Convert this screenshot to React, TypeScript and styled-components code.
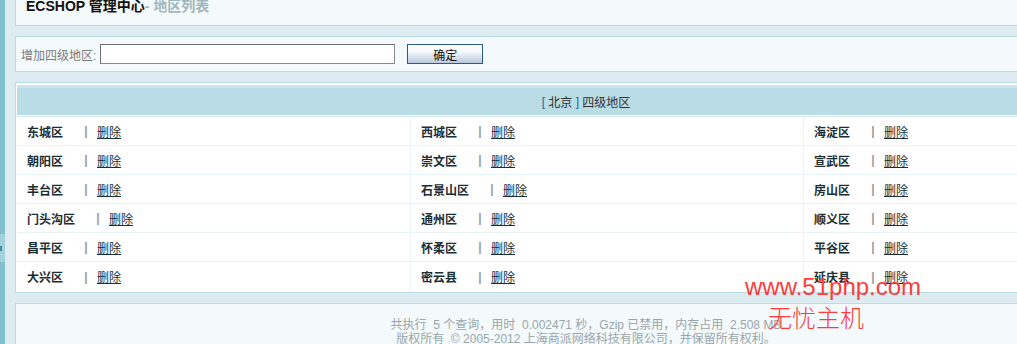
import React from "react";
import styled, { createGlobalStyle } from "styled-components";

const GlobalStyle = createGlobalStyle`
    html, body {
        margin: 0;
        padding: 0;
        height: 344px;
        overflow: hidden;
        background: #dcecf1;
    }
    body {
        font-family: "Liberation Sans", "Noto Sans CJK SC", sans-serif;
        font-size: 12px;
        color: #1b2e33;
    }
`;

const regions: string[] = [
    "东城区", "西城区", "海淀区",
    "朝阳区", "崇文区", "宣武区",
    "丰台区", "石景山区", "房山区",
    "门头沟区", "通州区", "顺义区",
    "昌平区", "怀柔区", "平谷区",
    "大兴区", "密云县", "延庆县",
];

const Frame = styled.div`
    display: flex;
    width: 1172px;
    height: 344px;
    position: relative;
`;

const SideStrip = styled.div`
    width: 5px;
    flex: none;
    background: #82bfcd;
    display: flex;
    flex-direction: column;
    padding-top: 234px;
    box-sizing: border-box;
`;

const SideHandle = styled.div`
    height: 28px;
    background: #a3d2dd;
    border-left: 2px solid #a3d2dd;
    box-sizing: border-box;
    display: flex;
    align-items: center;
    &::before {
        content: "";
        display: block;
        width: 2px;
        height: 5px;
        margin-left: -2px;
        background: #3d8ea3;
    }
`;

const Main = styled.div`
    flex: 1;
    padding: 0 15px 0 10px;
    display: flex;
    flex-direction: column;
    gap: 10px;
`;

const Panel = styled.div`
    background: #f4f9fb;
    border: 1px solid #bbdce4;
`;

const HeaderPanel = styled(Panel)`
    border-top: none;
    height: 26px;
    flex: none;
    box-sizing: border-box;
    padding-left: 10px;
`;

const Title = styled.h1`
    margin: 0;
    font-size: 14px;
    line-height: 13px;
    font-weight: bold;
    color: #111;
`;

const TitleSub = styled.span`
    color: #9fb6bd;
`;

const FormPanel = styled(Panel)`
    height: 36px;
    flex: none;
    box-sizing: border-box;
    display: flex;
    align-items: center;
    padding: 0 0 0 5px;
`;

const FormLabel = styled.label`
    color: #7a7a7a;
    font-size: 12px;
    margin-right: 4px;
`;

const TextInput = styled.input`
    width: 295px;
    height: 20px;
    box-sizing: border-box;
    border: 1px solid #8a8a8a;
    border-top-color: #6e6e6e;
    border-left-color: #6e6e6e;
    background: #fff;
    padding: 0 3px;
    margin: 0;
`;

const SubmitButton = styled.button`
    width: 76px;
    height: 20px;
    margin-left: 12px;
    box-sizing: border-box;
    border: 1px solid #2d5a8e;
    background: linear-gradient(#ffffff 0%, #f2f5f9 40%, #b9c8dd 100%);
    font-family: "Liberation Sans", "Noto Sans CJK SC", sans-serif;
    font-size: 12px;
    color: #111;
    padding: 0;
`;

const TablePanel = styled.div`
    flex: none;
    border: 1px solid #b8dce4;
    padding: 2px 1px 1px;
    background: #fff;
`;

const TableHead = styled.div`
    height: 31px;
    box-sizing: border-box;
    background: #badce4;
    border-top: 3px solid #c9e5eb;
    display: flex;
    align-items: center;
    justify-content: center;
    color: #333;
    border-bottom: 1px solid #fff;
`;

const Bracket = styled.span`
    color: #1b6b9a;
`;

const Grid = styled.div`
    display: grid;
    grid-template-columns: 393px 393px 1fr;
    border-top: 1px solid #d4eaef;
`;

const Cell = styled.div<{ $first: boolean; $last: boolean }>`
    height: 29px;
    box-sizing: border-box;
    display: flex;
    align-items: center;
    padding-left: 10px;
    border-left: ${(p) => (p.$first ? "none" : "1px solid #e8f3f6")};
    border-bottom: ${(p) => (p.$last ? "none" : "1px solid #e8f3f6")};
`;

const RegionName = styled.span`
    font-weight: bold;
    color: #1b2e33;
`;

const Divider = styled.span`
    display: inline-block;
    width: 12px;
    margin: 0 5px 0 17px;
    text-align: center;
    color: #9a9a9a;
    font-weight: bold;
`;

const DeleteLink = styled.a`
    color: #1b2e33;
    text-decoration: underline;
    cursor: pointer;
`;

const FooterPanel = styled(Panel)`
    flex: 1;
    border-bottom: none;
    padding-top: 14px;
    text-align: center;
    color: #9aa6aa;
    line-height: 14px;
`;

const Watermark = styled.div`
    position: absolute;
    left: 745px;
    top: 272px;
    color: #ff3b3b;
    font-family: "Liberation Sans", "Noto Sans CJK SC", sans-serif;
    font-size: 24px;
    line-height: 30px;
    pointer-events: none;
`;

const WatermarkCn = styled.div`
    padding-left: 23px;
    font-family: "Noto Sans CJK SC", sans-serif;
    font-weight: 300;
`;

export default function App() {
    return (
        <>
            <GlobalStyle />
            <Frame>
                <SideStrip>
                    <SideHandle />
                </SideStrip>
                <Main>
                    <HeaderPanel>
                        <Title>
                            ECSHOP 管理中心<TitleSub>- 地区列表</TitleSub>
                        </Title>
                    </HeaderPanel>
                    <FormPanel>
                        <FormLabel>增加四级地区:</FormLabel>
                        <TextInput type="text" />
                        <SubmitButton type="button">确定</SubmitButton>
                    </FormPanel>
                    <TablePanel>
                        <TableHead>
                            <Bracket>[</Bracket>&nbsp;北京&nbsp;<Bracket>]</Bracket>&nbsp;四级地区
                        </TableHead>
                        <Grid>
                            {regions.map((name, i) => (
                                <Cell key={name} $first={i % 3 === 0} $last={i >= regions.length - 3}>
                                    <RegionName>{name}</RegionName>
                                    <Divider>|</Divider>
                                    <DeleteLink>删除</DeleteLink>
                                </Cell>
                            ))}
                        </Grid>
                    </TablePanel>
                    <FooterPanel>
                        共执行&nbsp; 5 个查询，用时&nbsp; 0.002471 秒，Gzip 已禁用，内存占用&nbsp; 2.508 MB
                        <br />
                        版权所有&nbsp; © 2005-2012 上海商派网络科技有限公司，并保留所有权利。
                    </FooterPanel>
                </Main>
                <Watermark>
                    www.51php.com
                    <WatermarkCn>无忧主机</WatermarkCn>
                </Watermark>
            </Frame>
        </>
    );
}
